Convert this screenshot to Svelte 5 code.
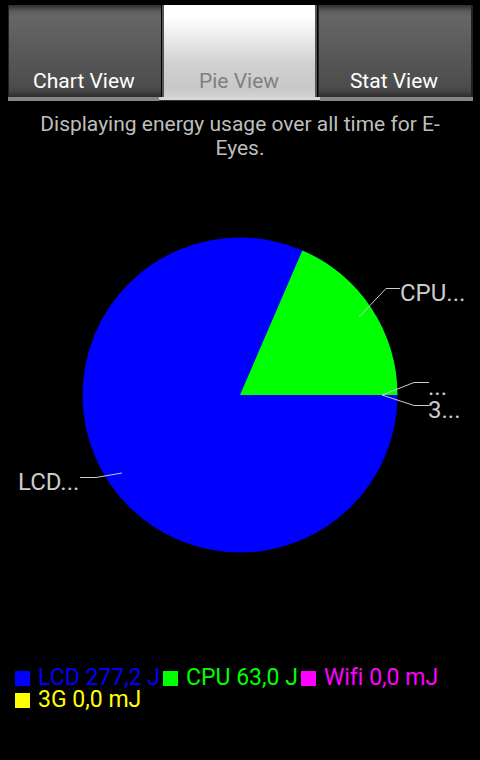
<script>
  const tabs = ['Chart View', 'Pie View', 'Stat View'];
  let active = $state('Pie View');

  const cx = 240;
  const cy = 230;
  const r = 157.5;
  const total = 277.2 + 63;
  const angle = (63 / total) * Math.PI * 2;
  const ex = cx + r * Math.cos(angle);
  const ey = cy - r * Math.sin(angle);

  const labels = [
    { text: 'CPU...', x: 400, y: 136, points: '359,152 386,123.5 400,123.5' },
    { text: '...', x: 428, y: 230, points: '382,230 414,217.5 429,217.5' },
    { text: '3...', x: 428, y: 253, points: '382,230 414,240.5 429,240.5' },
    { text: 'LCD...', x: 18, y: 325, points: '122,308 96,312.5 80,312.5' },
  ];

  const legend = [
    { text: 'LCD 277,2 J', color: '#0000ff' },
    { text: 'CPU 63,0 J', color: '#00ff00' },
    { text: 'Wifi 0,0 mJ', color: '#ff00ff' },
    { text: '3G 0,0 mJ', color: '#ffff00' },
  ];
</script>

<main>
  <nav>
    {#each tabs as tab}
      <button type="button" class:active={active === tab} onclick={() => (active = tab)}>
        <span>{tab}</span>
      </button>
    {/each}
  </nav>
  <p>Displaying energy usage over all time for E-Eyes.</p>
  <svg viewBox="0 0 480 490" role="img" aria-label="Energy usage by component">
    <circle {cx} {cy} {r} fill="#0000ff" />
    <path d="M{cx} {cy} L{cx + r} {cy} A{r} {r} 0 0 0 {ex} {ey} Z" fill="#00ff00" />
    {#each labels as label}
      <polyline points={label.points} />
      <text x={label.x} y={label.y}>{label.text}</text>
    {/each}
  </svg>
  <ul>
    {#each legend as item}
      <li style:color={item.color}><i></i>{item.text}</li>
    {/each}
  </ul>
</main>

<style>
  :global(body) {
    margin: 0;
    background: #000;
  }
  main {
    box-sizing: border-box;
    min-height: 100vh;
    background: #000;
    font-family: Roboto, 'Liberation Sans', sans-serif;
    font-variant-ligatures: none;
  }
  nav {
    display: flex;
    padding: 5px 7px 0 8px;
  }
  button {
    flex: 1;
    display: flex;
    align-items: flex-end;
    justify-content: center;
    box-sizing: border-box;
    height: 96px;
    padding: 0 3px 4px 0;
    border: 0;
    border-bottom: 4px solid #858585;
    border-radius: 0;
    background: linear-gradient(#2c2c2c, #5c5c5c 6px, #666 12px, #4c4c4c 82px, #444 86px, #2c2c2c);
    background-clip: padding-box;
    box-shadow: inset 1px 0 #222, inset -2px 0 #222;
    color: #fff;
    font: 21px/24px Roboto, 'Liberation Sans', sans-serif;
  }
  button.active {
    position: relative;
    height: 95px;
    padding-bottom: 7px;
    border-bottom: 0;
    background: linear-gradient(#fff 12px, #d0d0d0 60px, #c8c8c8 84px, #d8d8d8);
    box-shadow: 0 1px #333;
    color: #808080;
  }
  button.active::before,
  button.active::after {
    content: '';
    position: absolute;
    top: 0;
    width: 2px;
    height: 92px;
    background: #555;
  }
  button.active::before {
    left: -1px;
    box-shadow: -1px 0 #000;
  }
  button.active::after {
    right: 1px;
    box-shadow: 1px 0 #000;
  }
  /* light foot of the selected tab, reaching under its neighbours */
  button.active span::before {
    content: '';
    position: absolute;
    right: -2px;
    bottom: 0;
    left: -4px;
    height: 3px;
    background: #d8d8d8;
    box-shadow: 0 1px #333;
  }
  p {
    margin: 0;
    padding: 11px 24px 5px;
    color: #bebebe;
    font-size: 21px;
    line-height: 24px;
    text-align: center;
  }
  svg {
    display: block;
    width: 100%;
  }
  polyline {
    fill: none;
    stroke: #ccc;
    stroke-width: 1;
  }
  text {
    fill: #ccc;
    font-size: 24px;
  }
  ul {
    display: flex;
    flex-wrap: wrap;
    column-gap: 3px;
    margin: 0;
    padding: 12px 15px;
    list-style: none;
    font-size: 23px;
    line-height: 22px;
  }
  li {
    display: flex;
    align-items: center;
    gap: 8px;
  }
  i {
    width: 15px;
    height: 15px;
    background: currentColor;
  }
</style>
